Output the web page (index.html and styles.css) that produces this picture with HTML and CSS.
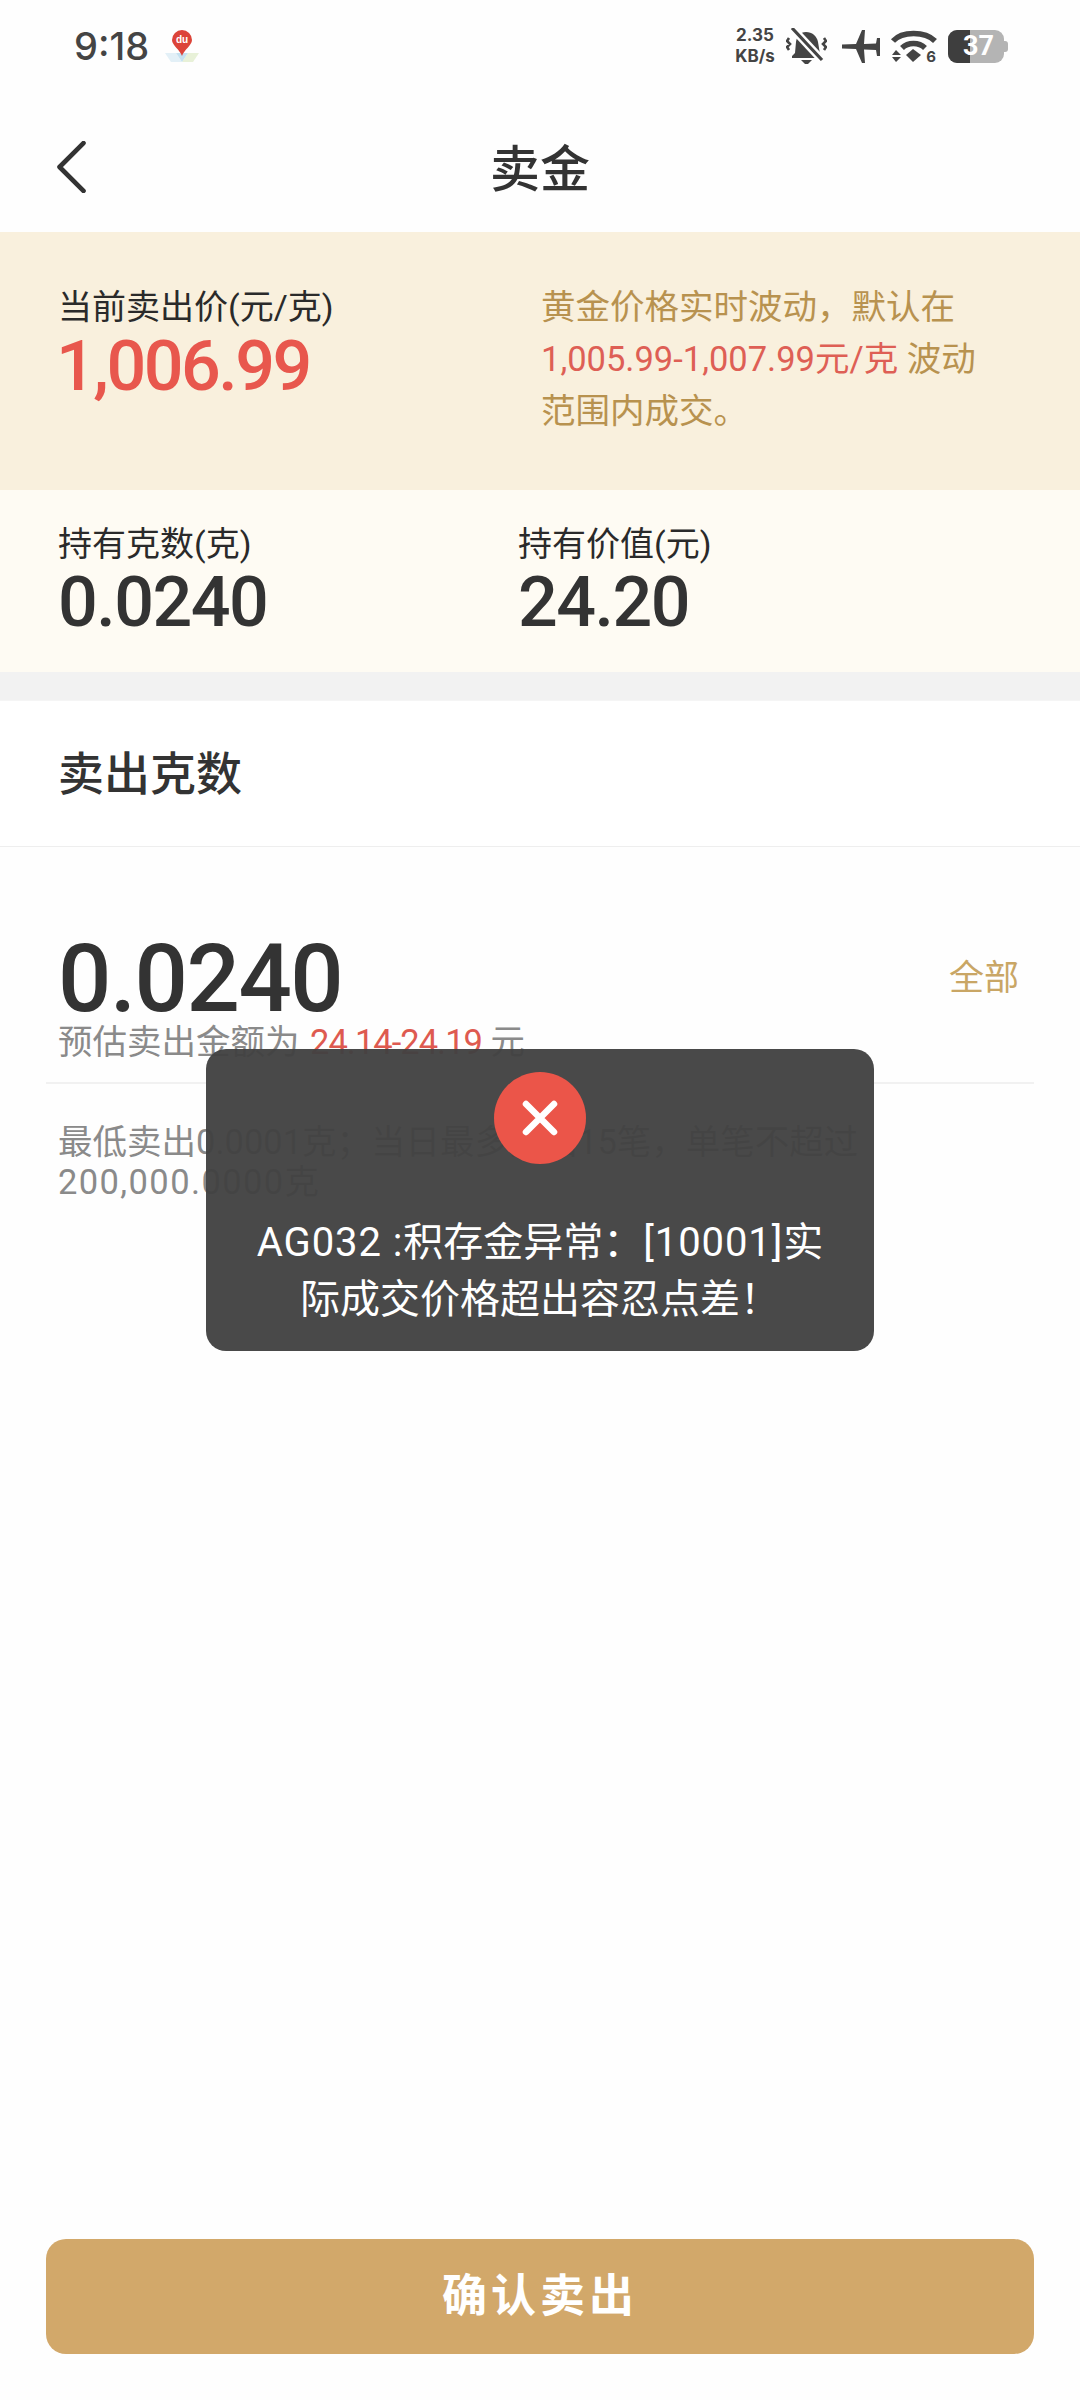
FILE: index.html
```html
<!DOCTYPE html>
<html lang="zh-CN">
<head>
  <meta charset="UTF-8" />
  <meta name="viewport" content="width=device-width, initial-scale=1.0"/>
  <title>卖金</title>
  <link rel="stylesheet" href="styles.css">
</head>
<body>
  <div class="status-bar">
    <div class="status-left">
      <span class="clock">9:18</span>
      <svg class="map-icon" viewBox="0 0 34 32">
        <path d="M0 23h11l6 9H6z" fill="#e3f0f7"/>
        <path d="M34 23H23l-6 9h11z" fill="#e8f1d8"/>
        <path d="M11 23h12l-6 9z" fill="#c5e1f0"/>
        <path d="M17 26C15 20 7 15 7 10a10 10 0 0 1 20 0c0 5-8 10-10 16z" fill="#dc4439"/>
        <text x="17" y="13" class="map-text">du</text>
      </svg>
    </div>
    <div class="status-right">
      <div class="net-speed"><span>2.35</span><span>KB/s</span></div>
      <svg class="icon-bell" viewBox="0 0 41 36">
        <path d="M20 4c6 0 11 4 12 10l2 12 2 3v1H6v-2l3-3 1-11C11 8 14 4 20 4z" fill="#444"/>
        <path d="M15 32h11l-4 4h-3z" fill="#444"/>
        <path d="M7 1l29 31" stroke="#fff" stroke-width="8"/>
        <path d="M6 0l30 32" stroke="#444" stroke-width="3.200"/>
        <path d="M3 10l-2 3 3 3-3 3 2 3M38 10l2 3-3 3 3 3-2 3" fill="none" stroke="#444" stroke-width="2.600"/>
      </svg>
      <svg class="icon-plane" viewBox="0 0 38 33">
        <path d="M0 14.500l14-.5L20 0h3l-1 14 12-.5L35 8h3v18h-3l-1-6-12-.5 1 13.500h-3l-6-14-14-.5a3 3 0 0 1 0-4z" fill="#444"/>
      </svg>
      <svg class="icon-wifi" viewBox="0 0 44 32">
        <path d="M1 11C10 1 33 1 43 11" fill="none" stroke="#444" stroke-width="5.500"/>
        <path d="M10 18c6-6 17-6 23 0" fill="none" stroke="#444" stroke-width="5.500"/>
        <path d="M21 19l8 6-8 7-7-7z" fill="#444"/>
        <path d="M4 20l5 5H0zM4 32l5-5H0z" fill="#444"/>
        <text x="44" y="32" class="wifi-text">6</text>
      </svg>
      <div class="battery">
        <div class="battery-level"></div>
        <span class="battery-text">37</span>
        <div class="battery-nub"></div>
      </div>
    </div>
  </div>

  <div class="nav-bar">
    <svg class="back-icon" viewBox="0 0 30 50">
      <path d="M27 2L4 25l23 23" fill="none" stroke="#333" stroke-width="4.500" stroke-linecap="round" stroke-linejoin="round"/>
    </svg>
    <h1 class="nav-title">卖金</h1>
  </div>

  <div class="price-band">
    <div class="price-col">
      <div class="label">当前卖出价(元/克)</div>
      <div class="price">1,006.99</div>
    </div>
    <p class="price-note">黄金价格实时波动，默认在<br><span class="note-red">1,005.99-1,007.99元/克</span> 波动<br>范围内成交。</p>
  </div>

  <div class="hold-band">
    <div class="hold-col">
      <div class="label">持有克数(克)</div>
      <div class="hold-value">0.0240</div>
    </div>
    <div class="hold-col">
      <div class="label">持有价值(元)</div>
      <div class="hold-value">24.20</div>
    </div>
  </div>

  <div class="sell-head">卖出克数</div>

  <div class="sell-form">
    <div class="amount-row">
      <span class="amount">0.0240</span>
      <span class="all-link">全部</span>
    </div>
    <div class="estimate">预估卖出金额为 <span class="estimate-red">24.14-24.19</span> 元</div>
    <div class="limit-note">最低卖出0.0001克；当日最多卖出15笔，单笔不超过<br><span class="limit-max">200,000.0000</span>克</div>
  </div>

  <div class="footer">
    <button class="confirm-btn">确认卖出</button>
  </div>

  <div class="toast">
    <div class="toast-icon">
      <svg viewBox="0 0 36 36"><path d="M4 4l28 28M32 4L4 32" stroke="#fff" stroke-width="6.500" stroke-linecap="round"/></svg>
    </div>
    <div class="toast-msg"><span class="toast-code">AG032 :</span>积存金异常：<span class="toast-code">[10001]</span>实<br>际成交价格超出容忍点差！</div>
  </div>
</body>
</html>
```

FILE: styles.css
```css
* {
  margin: 0;
  padding: 0;
  box-sizing: border-box;
}

body {
  position: relative;
  width: 1080px;
  height: 2400px;
  display: flex;
  flex-direction: column;
  overflow: hidden;
  background-color: #fefefe;
  color: #333;
  font-family: Roboto, "Noto Sans CJK SC", sans-serif;
}

/* status bar */
.status-bar {
  height: 92px;
  padding: 0 72px 0 74px;
  display: flex;
  justify-content: space-between;
  align-items: center;
}

.status-left {
  display: flex;
  align-items: center;
  gap: 16px;
}

.clock {
  font-family: Inter, sans-serif;
  font-size: 38px;
  font-weight: 500;
  color: #444;
}

.map-icon {
  width: 34px;
  height: 32px;
}

.map-text {
  font-family: "Liberation Sans", sans-serif;
  font-size: 10px;
  font-weight: 700;
  fill: #fff;
  text-anchor: middle;
}

.status-right {
  display: flex;
  align-items: center;
}

.net-speed {
  width: 44px;
  margin-right: 9px;
  display: flex;
  flex-direction: column;
  align-items: center;
  font-family: Inter, sans-serif;
  font-size: 17px;
  line-height: 21px;
  font-weight: 700;
  color: #444;
}

.icon-bell {
  width: 41px;
  height: 36px;
}

.icon-plane {
  width: 38px;
  height: 33px;
  margin-left: 15px;
}

.icon-wifi {
  width: 44px;
  height: 32px;
  margin-left: 12px;
  overflow: visible;
}

.wifi-text {
  font-family: Inter, sans-serif;
  font-size: 15px;
  font-weight: 700;
  fill: #444;
  text-anchor: end;
}

.battery {
  position: relative;
  width: 60px;
  height: 33px;
  margin-left: 12px;
}

.battery::before {
  content: "";
  position: absolute;
  left: 0;
  top: 0;
  width: 56px;
  height: 33px;
  border-radius: 9px;
  background-color: #b4b4b4;
}

.battery-level {
  position: absolute;
  left: 0;
  top: 0;
  width: 22px;
  height: 33px;
  border-radius: 9px 0 0 9px;
  background-color: #3e3e3e;
}

.battery-text {
  position: absolute;
  left: 15px;
  top: 0;
  font-family: Roboto, sans-serif;
  font-size: 27px;
  line-height: 33px;
  font-weight: 700;
  color: #fff;
}

.battery-nub {
  position: absolute;
  right: 0;
  top: 11px;
  width: 4px;
  height: 11px;
  border-radius: 0 3px 3px 0;
  background-color: #b4b4b4;
}

/* nav */
.nav-bar {
  position: relative;
  height: 140px;
  display: flex;
  align-items: center;
  justify-content: center;
}

.back-icon {
  position: absolute;
  left: 55px;
  top: 49px;
  width: 32px;
  height: 52px;
}

.nav-title {
  font-size: 50px;
  font-weight: 500;
  padding-top: 6px;
  color: #333;
}

/* price */
.price-band {
  height: 258px;
  padding: 51px 58px 0;
  display: flex;
  background-color: #f9f0dd;
}

.price-col {
  width: 483px;
}

.label {
  font-size: 34px;
  line-height: 48px;
  color: #2a2a2a;
}

.price {
  margin: 0 0 0 -2px;
  font-size: 70px;
  line-height: 70px;
  font-weight: 500;
  letter-spacing: -2.500px;
  color: #e8574d;
}

.price-note {
  margin-top: -2px;
  font-size: 34.500px;
  line-height: 52px;
  color: #b8924f;
}

.note-red {
  color: #de5f55;
}

.hold-band {
  height: 182px;
  padding: 30px 58px 0;
  display: flex;
  background-color: #fefbf3;
}

.hold-col {
  width: 460px;
}

.hold-value {
  margin-top: -3px;
  font-size: 70px;
  line-height: 74px;
  font-weight: 500;
  letter-spacing: -1.500px;
  color: #333;
}

/* sell form */
.sell-head {
  margin-top: 28px;
  height: 147px;
  padding: 0 0 7px 58px;
  display: flex;
  align-items: center;
  font-size: 46px;
  font-weight: 500;
  background-color: #fff;
  border-top: 1px solid #f5f5f5;
  border-bottom: 1px solid #eeeeee;
  box-shadow: 0 -28px 0 #f2f2f2;
}

.sell-form {
  flex: 1;
  padding: 0 46px;
}

.amount-row {
  height: 168px;
  padding: 90px 15px 0 12px;
  display: flex;
  justify-content: space-between;
  align-items: center;
}

.amount {
  margin-top: 6px;
  font-size: 94px;
  font-weight: 500;
  color: #333;
  line-height: 76px;
  letter-spacing: -1.500px;
}

.all-link {
  margin-bottom: 3px;
  font-size: 35px;
  color: #c9a665;
}

.estimate {
  height: 69px;
  padding: 3px 12px 0;
  font-size: 34.500px;
  line-height: 48px;
  color: #8a8a8a;
  border-bottom: 2px solid #f1f1f1;
}

.estimate-red {
  margin-left: 2px;
  letter-spacing: -1px;
  color: #de5a50;
}

.limit-note {
  padding: 38px 12px 0;
  font-size: 34.500px;
  line-height: 40px;
  color: #8a8a8a;
}

.limit-max {
  letter-spacing: 1.400px;
}

.footer {
  height: 161px;
  padding: 0 46px;
}

.confirm-btn {
  width: 988px;
  height: 115px;
  padding-bottom: 8px;
  border: none;
  border-radius: 20px;
  background-color: #d2a86a;
  color: #fff;
  font-family: inherit;
  font-size: 45px;
  font-weight: 700;
  letter-spacing: 4px;
}

/* toast over the form */
.toast {
  position: absolute;
  left: 206px;
  top: 1049px;
  width: 668px;
  height: 302px;
  padding-top: 23px;
  display: flex;
  flex-direction: column;
  align-items: center;
  border-radius: 20px;
  background-color: rgba(66, 66, 66, 0.96);
}

.toast-icon {
  width: 92px;
  height: 92px;
  display: flex;
  align-items: center;
  justify-content: center;
  border-radius: 50%;
  background-color: #eb5549;
}

.toast-icon svg {
  width: 36px;
  height: 36px;
}

.toast-msg {
  margin-top: 50px;
  font-size: 40px;
  line-height: 57px;
  text-align: center;
  color: #fff;
}

.toast-code {
  letter-spacing: 0.900px;
}
```
